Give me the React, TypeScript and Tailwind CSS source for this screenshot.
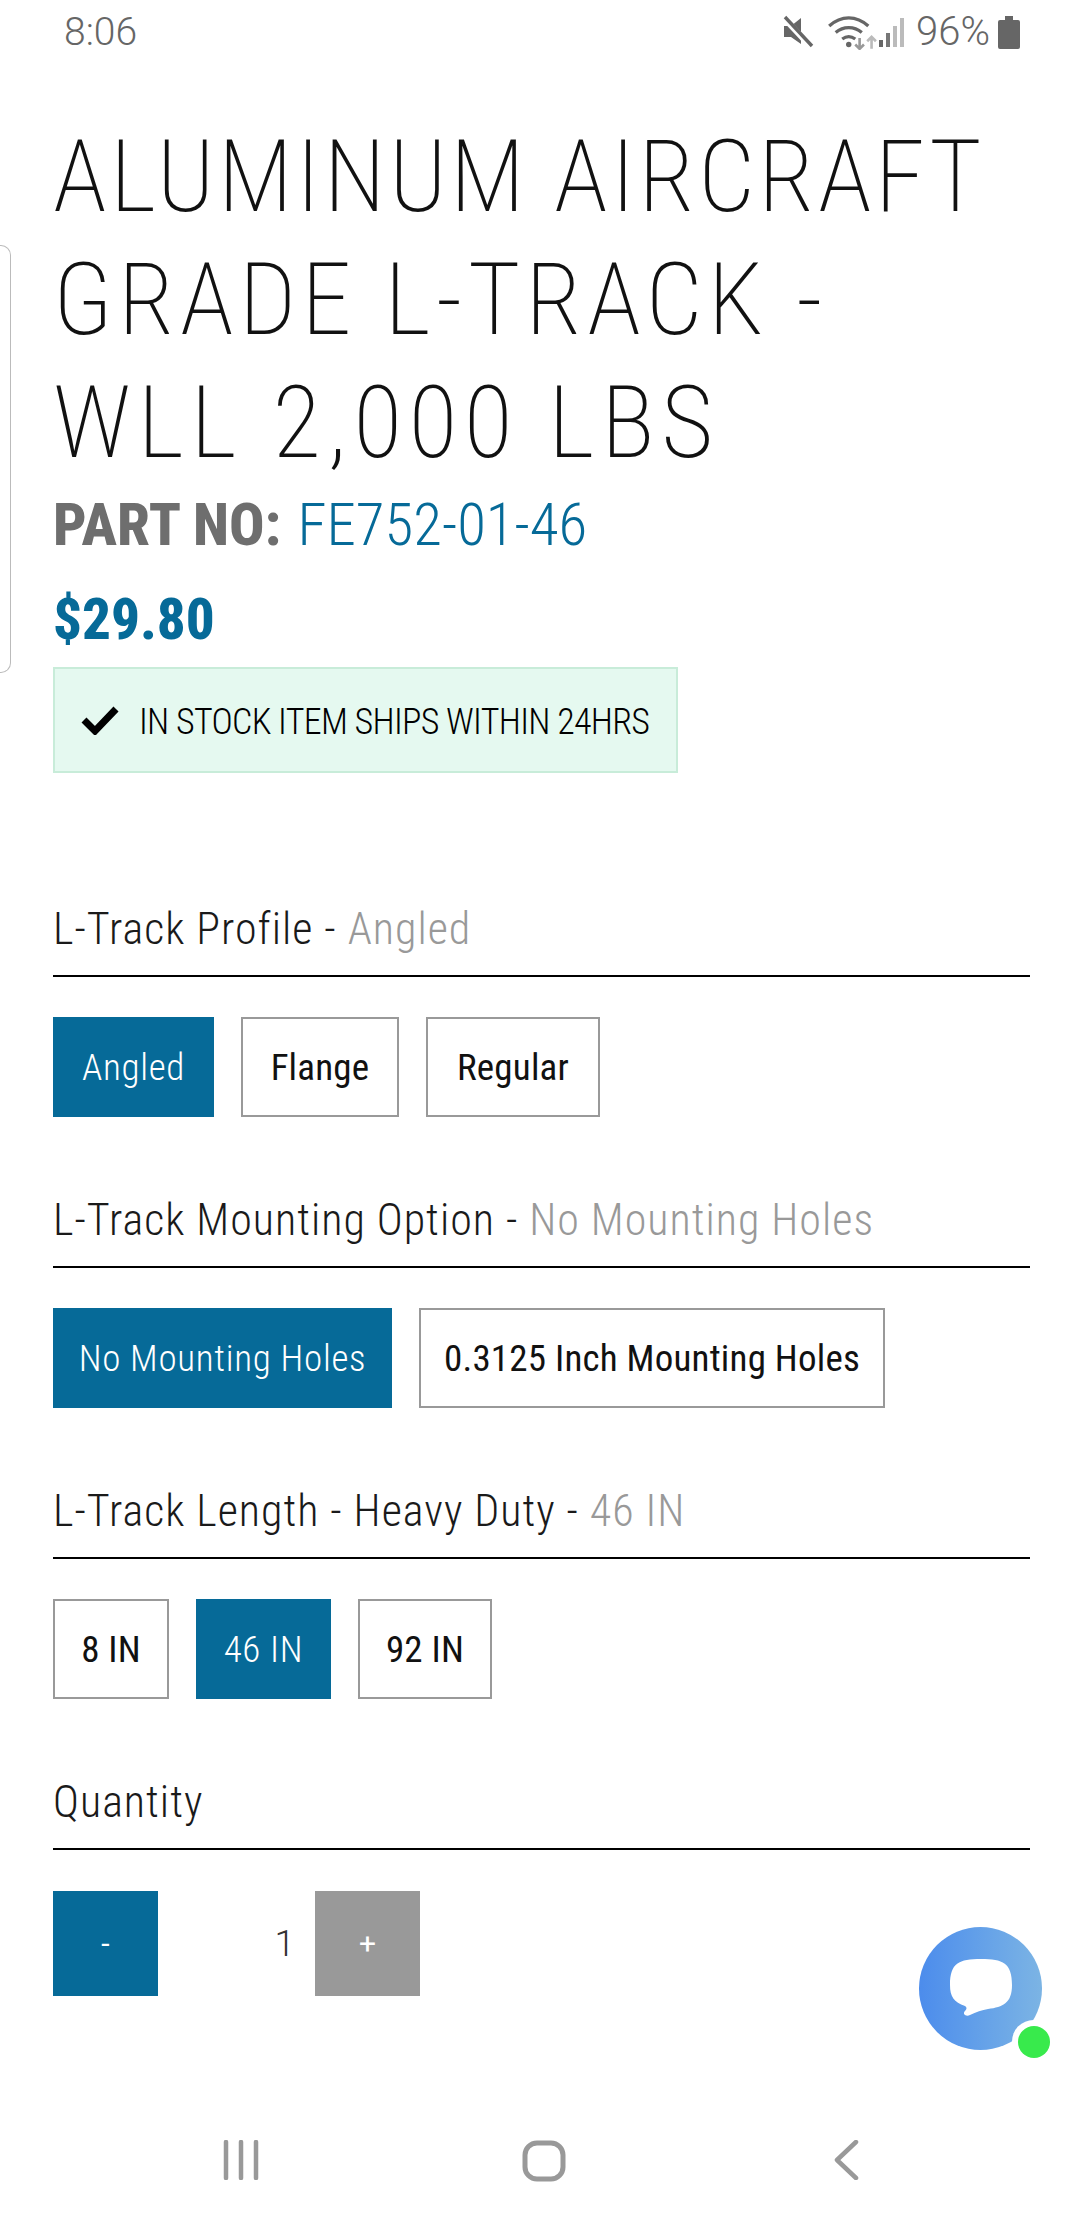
const font = "font-['Roboto',sans-serif]";

type Option = { label: string; active?: boolean; width: string };

interface OptionGroupProps {
  title: string;
  value?: string;
  options: Option[];
}

const headingClass =
  "h-[75px] pt-[2px] border-b-2 border-black text-[44px] leading-[50px] font-light text-[#1a1a1a] tracking-[1px] [font-stretch:85%] whitespace-nowrap";

const OptionGroup = ({ title, value, options }: OptionGroupProps) => (
  <section>
    <div className={headingClass}>
      {title} - <span className="text-[#999999]">{value}</span>
    </div>
    <div className="mt-[40px] flex gap-[27px]">
      {options.map((o) =>
        o.active ? (
          <div
            key={o.label}
            className={`${o.width} h-[100px] pt-[2px] flex items-center justify-center bg-[#066a98] text-white text-[37px] font-light tracking-[0.7px] [font-stretch:85%] whitespace-nowrap`}
          >
            {o.label}
          </div>
        ) : (
          <div
            key={o.label}
            className={`${o.width} h-[100px] pt-[2px] flex items-center justify-center border-2 border-[#999999] text-[#111111] text-[37px] font-normal tracking-[0.2px] [font-stretch:85%] whitespace-nowrap`}
          >
            {o.label}
          </div>
        ),
      )}
    </div>
  </section>
);

const StatusBar = () => (
  <div className="h-[64px] pl-[64px] pr-[60px] flex items-center justify-between text-[#666666]">
    <span className="text-[39px] font-light">8:06</span>
    <div className="flex items-center">
      <svg width="36" height="36" viewBox="0 0 36 36" className="mr-[11px]">
        <path d="M4 12h7l10-8v26l-10-7H4z" fill="#666666" />
        <path d="M3 3l28 30" stroke="#fff" strokeWidth="6" />
        <path d="M5 3l27 29" stroke="#666666" strokeWidth="3.4" />
      </svg>
      <svg width="50" height="36" viewBox="0 0 46 33">
        <path d="M2 11c11-10 25-10 36 0M8 17c7-6 17-6 24 0M14 23c4-3 8-3 12 0" fill="none" stroke="#666666" strokeWidth="3" />
        <circle cx="20" cy="28" r="2.5" fill="#666666" />
        <path d="M30 22v10M26 28l4 4 4-4" fill="none" stroke="#999999" strokeWidth="2.4" />
        <path d="M41 32V21M37 25l4-4 4 4" fill="none" stroke="#bbbbbb" strokeWidth="2.4" />
      </svg>
      <svg width="28" height="32" viewBox="0 0 28 32" className="ml-[1px]">
        <rect x="1" y="24" width="4" height="7" fill="#666666" />
        <rect x="8" y="17" width="4" height="14" fill="#777777" />
        <rect x="15" y="10" width="4" height="21" fill="#bbbbbb" />
        <rect x="22" y="2" width="4" height="29" fill="#bbbbbb" />
      </svg>
      <span className="ml-[10px] text-[40px] font-light">96%</span>
      <svg width="22" height="34" viewBox="0 0 22 34" className="ml-[8px]">
        <path d="M7 1h8v4h5a2 2 0 0 1 2 2v25a2 2 0 0 1-2 2H2a2 2 0 0 1-2-2V7a2 2 0 0 1 2-2h5z" fill="#666666" />
      </svg>
    </div>
  </div>
);

const NavBar = () => (
  <div className="absolute bottom-0 left-0 right-0 h-[100px]">
    <div className="h-full flex items-start pt-[20px] pl-[222px]">
      <svg width="40" height="40" viewBox="0 0 40 40">
        <path d="M4 2v36M19 2v36M34 2v36" stroke="#999999" strokeWidth="4.5" strokeLinecap="round" />
      </svg>
      <svg width="44" height="42" viewBox="0 0 44 42" className="ml-[260px]">
        <rect x="3" y="3" width="38" height="36" rx="12" fill="none" stroke="#999999" strokeWidth="5" />
      </svg>
      <svg width="26" height="40" viewBox="0 0 26 40" className="ml-[267px]">
        <path d="M23 2L4 20l19 18" fill="none" stroke="#999999" strokeWidth="4.5" strokeLinecap="round" strokeLinejoin="round" />
      </svg>
    </div>
  </div>
);

const ChatBubble = () => (
  <div className="absolute left-[919px] top-[1927px] w-[123px] h-[123px] rounded-full bg-gradient-to-r from-[#4c8cec] to-[#7cb4e4] flex items-center justify-center">
    <svg width="66" height="60" viewBox="0 0 66 60" className="mb-[4px]">
      <path d="M33 2c22 0 31 4 31 26 0 18-9 22-24 24-6 1-12 3-18 6-4 2-8-1-5-4 2-2 2-4 0-5C6 45 2 40 2 28 2 6 11 2 33 2z" fill="#ffffff" />
    </svg>
    <div className="absolute left-[93px] top-[93px] w-[43px] h-[43px] rounded-full bg-white flex items-center justify-center">
      <div className="w-[32px] h-[32px] rounded-full bg-[#38ea4c]" />
    </div>
  </div>
);

export default function App() {
  return (
    <div className={`relative w-[1080px] h-[2220px] bg-white overflow-hidden ${font}`}>
      <StatusBar />
      <div className="absolute left-0 top-[245px] w-[11px] h-[428px] border border-l-0 border-[#bbbbbb] rounded-r-[10px]" />

      <div className="pl-[53px] pr-[50px]">
        <h1 className="mt-[51px] text-[100px] leading-[123px] font-[170] text-[#111111] [font-stretch:85%] whitespace-nowrap">
          <span className="block tracking-[3.4px]">ALUMINUM AIRCRAFT</span>
          <span className="block tracking-[5.4px]">GRADE L-TRACK -</span>
          <span className="block tracking-[6.8px]">WLL 2,000 LBS</span>
        </h1>
        <p className="mt-[6px] text-[59px] leading-[70px] font-light text-[#066a98] [font-stretch:85%] whitespace-nowrap">
          <span className="font-extrabold text-[#6e6e6e] mr-[3px]">PART NO:</span> FE752-01-46
        </p>
        <p className="mt-[27px] text-[57px] leading-[66px] font-extrabold text-[#066a98] [font-stretch:85%]">$29.80</p>
        <div className="mt-[14px] w-[625px] h-[106px] border-2 border-[#c8ecd9] bg-[#e5f9f0] flex items-center pl-[26px]">
          <svg width="38" height="30" viewBox="0 0 38 30">
            <path d="M3 15l11 11L35 4" fill="none" stroke="#000000" strokeWidth="7" />
          </svg>
          <span className="ml-[20px] pt-[4px] text-[36px] text-black font-light [font-stretch:85%] whitespace-nowrap tracking-[-0.7px]">
            IN STOCK ITEM SHIPS WITHIN 24HRS
          </span>
        </div>

        <div className="mt-[129px] flex flex-col gap-[76px]">
          <OptionGroup
            title="L-Track Profile"
            value="Angled"
            options={[
              { label: "Angled", active: true, width: "w-[161px]" },
              { label: "Flange", width: "w-[158px]" },
              { label: "Regular", width: "w-[174px]" },
            ]}
          />
          <OptionGroup
            title="L-Track Mounting Option"
            value="No Mounting Holes"
            options={[
              { label: "No Mounting Holes", active: true, width: "w-[339px]" },
              { label: "0.3125 Inch Mounting Holes", width: "w-[466px]" },
            ]}
          />
          <OptionGroup
            title="L-Track Length - Heavy Duty"
            value="46 IN"
            options={[
              { label: "8 IN", width: "w-[116px]" },
              { label: "46 IN", active: true, width: "w-[135px]" },
              { label: "92 IN", width: "w-[134px]" },
            ]}
          />
          <section>
            <div className={headingClass}>Quantity</div>
            <div className="mt-[41px] flex items-center">
              <div className="w-[105px] h-[105px] bg-[#066a98] text-white text-[30px] flex items-center justify-center">-</div>
              <div className="w-[157px] text-right pr-[20px] text-[37px] font-light text-[#333333]">1</div>
              <div className="w-[105px] h-[105px] bg-[#999999] text-white text-[30px] flex items-center justify-center">+</div>
            </div>
          </section>
        </div>
      </div>

      <ChatBubble />
      <NavBar />
    </div>
  );
}
